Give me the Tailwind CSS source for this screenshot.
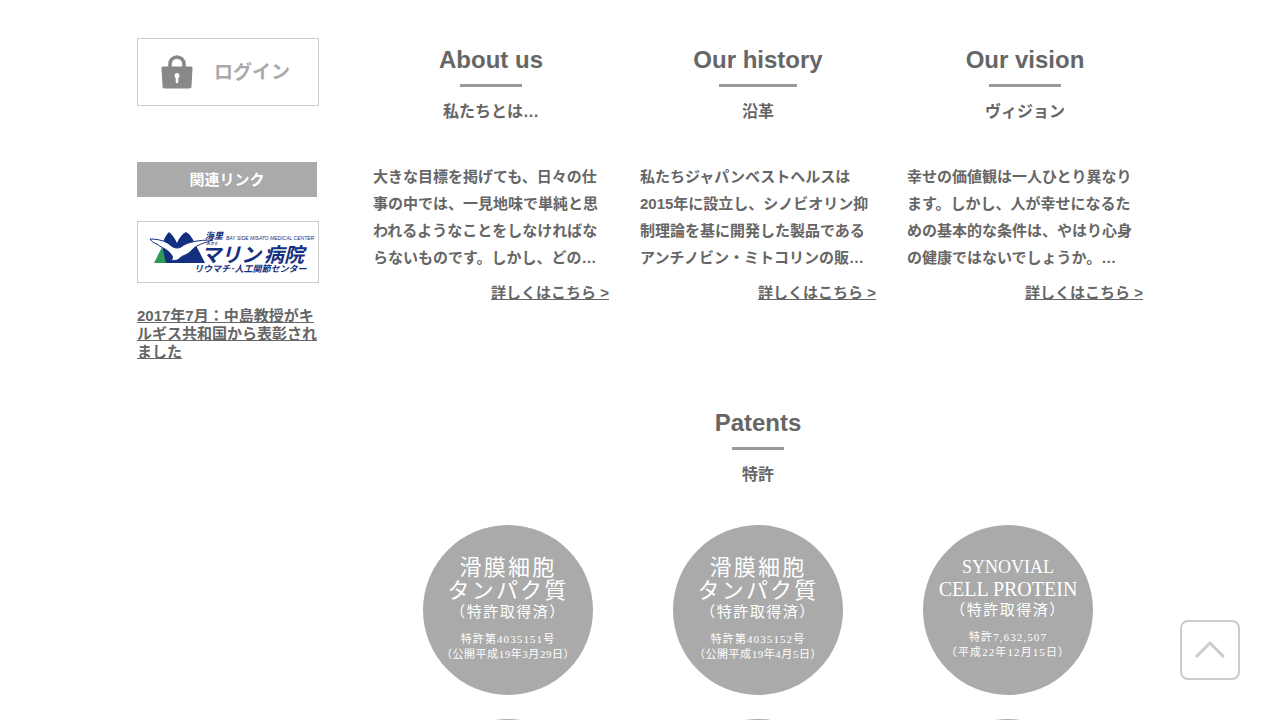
<!DOCTYPE html>
<html lang="ja">
<head>
  <meta charset="UTF-8">
  <meta name="viewport" content="width=device-width, initial-scale=1.0">
  <title>ジャパンベストヘルス</title>
  <script src="https://cdn.jsdelivr.net/npm/@tailwindcss/browser@4"></script>
</head>
<body class="bg-white text-[#666666] font-bold text-[15px] font-['Liberation_Sans','Noto_Sans_CJK_JP',sans-serif]">
  <div class="h-screen overflow-hidden">
    <div class="max-w-[1006px] mx-auto flex gap-[54px] pt-[38px]">

      <!-- Sidebar -->
      <aside class="w-[182px] shrink-0">
        <a href="#login" class="flex items-center h-[68px] border border-[#cccccc] pl-[23px] text-[19px] text-[#aaaaaa]">
          <svg class="w-8 h-[34px] mr-[21px]" viewBox="0 0 32 34" aria-hidden="true">
            <path d="M9 13V9a7 7 0 0 1 14 0v4" fill="none" stroke="#888888" stroke-width="3.6"/>
            <path d="M2 11.500h28a1.500 1.500 0 0 1 1.500 1.500L30.500 31.500a2 2 0 0 1-2 2h-25a2 2 0 0 1-2-2L.5 13a1.500 1.500 0 0 1 1.500-1.500z" fill="#888888"/>
            <path d="M16 18a2.600 2.600 0 0 1 1.300 4.800v4.200a1.300 1.300 0 0 1-2.600 0v-4.200A2.600 2.600 0 0 1 16 18z" fill="#ffffff"/>
          </svg>
          <span class="pt-0.5">ログイン</span>
        </a>

        <h2 class="mt-14 w-[180px] h-[35px] pt-0.5 flex items-center justify-center bg-[#aaaaaa] text-white">関連リンク</h2>

        <a href="#hospital" class="block mt-6 h-[62px] border border-[#cccccc]">
          <svg class="block w-[180px] h-[60px]" viewBox="0 0 180 60" role="img" aria-label="海里マリン病院">
            <path d="M16 41L24 25L30 41z" fill="#2f9a55"/>
            <path d="M28 41L24 24C25 18 28 13 31 10C35 13 37 17 39 21C41 16 44 12 48 10C52 12 55 17 57 22C60 27 64 35 67 41z" fill="#152f80"/>
            <path d="M12 17C20 17 27 19 31 22C35 26 39 27 43 25C49 20 60 18 75 18C66 21 58 23 54 28C50 33 45 33 42 36C40 38 38 39 33 38C36 36 34 33 31 30C27 26 22 25 19 22C16 21 14 20 12 17z" fill="#ffffff" stroke="#152f80"/>
            <g fill="#152f80" class="font-['Noto_Sans_CJK_JP',sans-serif] font-bold italic">
              <text x="67" y="17" font-size="9">海里</text>
              <text x="68" y="23" font-size="4">みさと</text>
              <text x="88" y="18" font-size="5" class="font-['Liberation_Sans',sans-serif] font-normal">BAY SIDE MISATO MEDICAL CENTER</text>
              <text x="63" y="40" font-size="20">マリン</text>
              <text x="126" y="40" font-size="20">病院</text>
              <text x="56" y="50" font-size="9">リウマチ･人工関節センター</text>
            </g>
          </svg>
        </a>

        <a href="#news" class="block mt-6 w-[180px] leading-[18px] underline">2017年7月：中島教授がキルギス共和国から表彰されました</a>
      </aside>

      <!-- Main -->
      <main class="flex-1 min-w-0 pt-2">
        <div class="grid grid-cols-3 gap-[31px]">
          <section>
            <div class="flex flex-col items-center">
              <h2 class="text-2xl leading-[28px]">About us<span class="block w-3/5 h-[3px] mt-[10px] mx-auto bg-[#999999]"></span></h2>
              <p class="mt-[13px] text-base leading-6">私たちとは…</p>
            </div>
            <p class="mt-[39px] leading-[27px]">大きな目標を掲げても、日々の仕事の中では、一見地味で単純と思われるようなことをしなければならないものです。しかし、どの…</p>
            <p class="mt-2 leading-[27px] text-right"><a href="#about" class="underline">詳しくはこちら &gt;</a></p>
          </section>
          <section>
            <div class="flex flex-col items-center">
              <h2 class="text-2xl leading-[28px]">Our history<span class="block w-3/5 h-[3px] mt-[10px] mx-auto bg-[#999999]"></span></h2>
              <p class="mt-[13px] text-base leading-6">沿革</p>
            </div>
            <p class="mt-[39px] leading-[27px]">私たちジャパンベストヘルスは2015年に設立し、シノビオリン抑制理論を基に開発した製品であるアンチノビン・ミトコリンの販…</p>
            <p class="mt-2 leading-[27px] text-right"><a href="#history" class="underline">詳しくはこちら &gt;</a></p>
          </section>
          <section>
            <div class="flex flex-col items-center">
              <h2 class="text-2xl leading-[28px]">Our vision<span class="block w-3/5 h-[3px] mt-[10px] mx-auto bg-[#999999]"></span></h2>
              <p class="mt-[13px] text-base leading-6">ヴィジョン</p>
            </div>
            <p class="mt-[39px] leading-[27px]">幸せの価値観は一人ひとり異なります。しかし、人が幸せになるための基本的な条件は、やはり心身の健康ではないでしょうか。…</p>
            <p class="mt-2 leading-[27px] text-right"><a href="#vision" class="underline">詳しくはこちら &gt;</a></p>
          </section>
        </div>

        <!-- Patents -->
        <section class="mt-[103px]">
          <div class="flex flex-col items-center">
            <h2 class="text-2xl leading-[28px]">Patents<span class="block w-3/5 h-[3px] mt-[10px] mx-auto bg-[#999999]"></span></h2>
            <p class="mt-[13px] text-base leading-6">特許</p>
          </div>
          <div class="mt-[38px] px-[10px] grid grid-cols-3 gap-y-6 justify-items-center text-white font-normal text-center whitespace-nowrap font-['Liberation_Serif','Noto_Sans_CJK_JP',serif]">
            <a href="#patent1" class="size-[170px] rounded-full bg-[#aaaaaa] flex flex-col items-center pt-[31px]">
              <span class="text-[22px] leading-[23px] tracking-widest">滑膜細胞</span>
              <span class="text-[22px] leading-[23px] tracking-widest">タンパク質</span>
              <span class="text-[15px] leading-[20px] tracking-widest">（特許取得済）</span>
              <span class="mt-[10px] text-[11px] leading-[15px] tracking-widest">特許第4035151号</span>
              <span class="text-[11px] leading-[15px] tracking-wider">（公開平成19年3月29日）</span>
            </a>
            <a href="#patent2" class="size-[170px] rounded-full bg-[#aaaaaa] flex flex-col items-center pt-[31px]">
              <span class="text-[22px] leading-[23px] tracking-widest">滑膜細胞</span>
              <span class="text-[22px] leading-[23px] tracking-widest">タンパク質</span>
              <span class="text-[15px] leading-[20px] tracking-widest">（特許取得済）</span>
              <span class="mt-[10px] text-[11px] leading-[15px] tracking-widest">特許第4035152号</span>
              <span class="text-[11px] leading-[15px] tracking-wider">（公開平成19年4月5日）</span>
            </a>
            <a href="#patent3" class="size-[170px] rounded-full bg-[#aaaaaa] flex flex-col items-center pt-[31px]">
              <span class="text-[18px] leading-[22px]">SYNOVIAL</span>
              <span class="text-[20px] leading-[22px]">CELL PROTEIN</span>
              <span class="text-[15px] leading-[20px] tracking-widest">（特許取得済）</span>
              <span class="mt-[10px] text-[11px] leading-[15px] tracking-widest">特許7,632,507</span>
              <span class="text-[11px] leading-[15px] tracking-widest">（平成22年12月15日）</span>
            </a>
            <a href="#patent4" class="size-[170px] rounded-full bg-[#aaaaaa]"></a>
            <a href="#patent5" class="size-[170px] rounded-full bg-[#aaaaaa]"></a>
            <a href="#patent6" class="size-[170px] rounded-full bg-[#aaaaaa]"></a>
          </div>
        </section>
      </main>
    </div>
  </div>

  <!-- Back to top -->
  <button type="button" onclick="window.scrollTo(0, 0)" aria-label="トップへ戻る" class="fixed right-10 bottom-10 size-[60px] rounded-lg border-2 border-[#cccccc] bg-white flex items-center justify-center">
    <svg class="w-8 h-5" viewBox="0 0 32 20" fill="none" stroke="#cccccc" stroke-width="3" aria-hidden="true"><path d="M2 17L16 3L30 17"/></svg>
  </button>
</body>
</html>
